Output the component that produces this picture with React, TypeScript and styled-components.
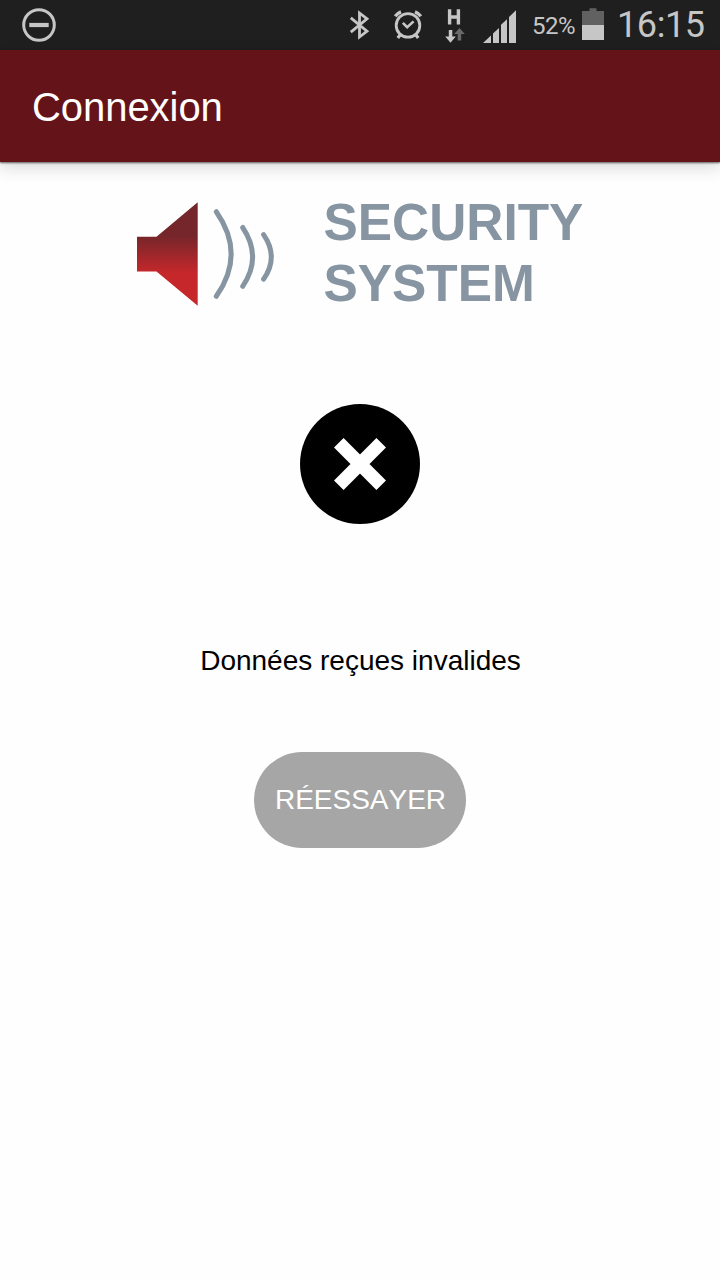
import React from 'react';
import styled, { createGlobalStyle } from 'styled-components';

const GlobalStyle = createGlobalStyle`
  * { box-sizing: border-box; }
  body {
    margin: 0;
    background: #fefefe;
    font-family: "Liberation Sans", Arial, sans-serif;
  }
`;

const Screen = styled.div`
  display: flex;
  flex-direction: column;
  width: 720px;
  height: 1280px;
  overflow: hidden;
  background: #fefefe;
`;

const StatusBar = styled.div`
  display: flex;
  align-items: center;
  flex: none;
  height: 50px;
  padding: 0 14px 0 20px;
  background: #1f1f1f;
  color: #c6c6c6;
  font-family: Roboto, sans-serif;
`;

const StatusIcon = styled.svg<{ $gap?: number }>`
  display: block;
  flex: none;
  height: 50px;
  margin-left: ${({ $gap = 0 }) => $gap}px;
`;

const Spacer = styled.div`
  flex: 1;
`;

const BatteryLevel = styled.span`
  width: 51px;
  margin-left: 13px;
  padding: 2px 0 0 1px;
  font-size: 24px;
  line-height: 28px;
  letter-spacing: -0.5px;
`;

const Clock = styled.span`
  width: 90px;
  margin-left: 12px;
  padding-left: 1px;
  font-size: 36px;
  font-weight: 400;
  line-height: 50px;
  letter-spacing: -0.4px;
  white-space: nowrap;
`;

const AppBar = styled.header`
  display: flex;
  align-items: center;
  flex: none;
  height: 112px;
  padding: 2px 32px 0;
  background: #641418;
  color: #fff;
  z-index: 1;
  box-shadow: 0 1px 2px rgba(0, 0, 0, 0.6), 0 6px 16px rgba(0, 0, 0, 0.14);
`;

const Title = styled.h1`
  margin: 0;
  font-size: 40px;
  font-weight: 400;
  line-height: 46px;
  letter-spacing: -0.05px;
`;

const Content = styled.main`
  display: flex;
  flex-direction: column;
  align-items: center;
`;

const Brand = styled.div`
  display: flex;
  align-items: flex-start;
  width: 450px;
  height: 122px;
  margin-top: 30px;
  margin-left: 4px;
`;

const Speaker = styled.svg`
  display: block;
  flex: none;
  width: 150px;
  height: 122px;
`;

const BrandName = styled.div`
  margin-left: 36.5px;
  color: #8795a3;
  font-size: 51.4px;
  font-weight: 700;
  line-height: 61px;
`;

const ErrorIcon = styled.svg`
  display: block;
  width: 120px;
  height: 120px;
  margin-top: 90px;
`;

const Message = styled.p`
  margin: 121px 0 0;
  padding-left: 1px;
  color: #000;
  font-size: 28px;
  line-height: 32px;
`;

const RetryButton = styled.button`
  width: 212px;
  height: 96px;
  margin-top: 75px;
  padding: 0 0 1px 1px;
  border: 0;
  border-radius: 48px;
  background: #a6a6a6;
  color: #fff;
  font: 400 28px/33px "Liberation Sans", Arial, sans-serif;
  text-transform: uppercase;
  font-kerning: none;
  white-space: nowrap;
`;

export default function App() {
  return (
    <Screen>
      <GlobalStyle />
      <StatusBar>
        <StatusIcon width="38" viewBox="20 0 38 50" fill="none" stroke="#c6c6c6">
          <circle cx="39" cy="25" r="15.3" strokeWidth="3" />
          <path d="M29.3 25H48.7" strokeWidth="4.2" />
        </StatusIcon>
        <Spacer />
        <StatusIcon width="24" viewBox="348 0 24 50" fill="none" stroke="#c6c6c6" strokeWidth="2.8">
          <path d="M350.8 17.8L367 31.2L359.5 37V13L367 18.8L350.8 32.2" />
        </StatusIcon>
        <StatusIcon $gap={20} width="32" viewBox="392 0 32 50" fill="none" stroke="#c6c6c6">
          <circle cx="408" cy="25.4" r="11.8" strokeWidth="2.8" />
          <path d="M402.8 22.8L407.2 27.2L413.6 21.4" strokeWidth="2.6" />
          <path d="M395.2 16.2Q397.4 13.2 401 11.8M420.8 16.2Q418.6 13.2 415 11.8" strokeWidth="3.4" />
          <path d="M400.6 34.2L397.8 38M415.4 34.2L418.2 38" strokeWidth="3.2" />
        </StatusIcon>
        <StatusIcon $gap={20} width="22" viewBox="444 0 22 50">
          <path d="M449.6 9.3V24.5M458.4 9.3V24.5M449.6 17H458.4" stroke="#c6c6c6" strokeWidth="3.4" />
          <path d="M448.8 30H452.3V36.5H455.8L450.5 42.8L445.2 36.5H448.8Z" fill="#c6c6c6" />
          <path d="M459.5 28L464.8 34H461.2V40.5H457.7V34H454.2Z" fill="#6a6a6a" />
        </StatusIcon>
        <StatusIcon $gap={16} width="36" viewBox="482 0 36 50" fill="#c6c6c6">
          <path d="M483 43L491 35.5V43ZM493 33.5L499 28V43H493ZM501 24.8L507 19.2V43H501ZM509 17L516 10.3V43H509Z" />
        </StatusIcon>
        <BatteryLevel>52%</BatteryLevel>
        <StatusIcon width="22" viewBox="582 0 22 50">
          <path d="M582 11H589.5V8.3H596.5V11H604V25H582Z" fill="#616161" />
          <path d="M582 25H604V40H582Z" fill="#c6c6c6" />
        </StatusIcon>
        <Clock>16:15</Clock>
      </StatusBar>
      <AppBar>
        <Title>Connexion</Title>
      </AppBar>
      <Content>
        <Brand>
          <Speaker viewBox="137 192 150 122">
            <defs>
              <linearGradient id="horn" gradientUnits="userSpaceOnUse" x1="0" y1="202" x2="0" y2="306">
                <stop offset="0.32" stopColor="#74262a" />
                <stop offset="0.68" stopColor="#c5272b" />
              </linearGradient>
            </defs>
            <path d="M137 236.7H156.5L197.7 202.3V305.7L156.5 271.4H137Z" fill="url(#horn)" />
            <g fill="none" stroke="#8795a3" strokeWidth="5" strokeLinecap="round">
              <path d="M216.3 211.7Q246 254 216.3 296.3" />
              <path d="M242.7 227.5Q262.5 257 242.7 286.3" />
              <path d="M263.6 234.6Q279 257 263.6 279.2" />
            </g>
          </Speaker>
          <BrandName>
            SECURITY
            <br />
            SYSTEM
          </BrandName>
        </Brand>
        <ErrorIcon viewBox="0 0 120 120">
          <circle cx="60" cy="60" r="60" />
          <path d="M38.8 38.8L81.2 81.2M81.2 38.8L38.8 81.2" stroke="#fff" strokeWidth="13.5" />
        </ErrorIcon>
        <Message>Données reçues invalides</Message>
        <RetryButton>Réessayer</RetryButton>
      </Content>
    </Screen>
  );
}
